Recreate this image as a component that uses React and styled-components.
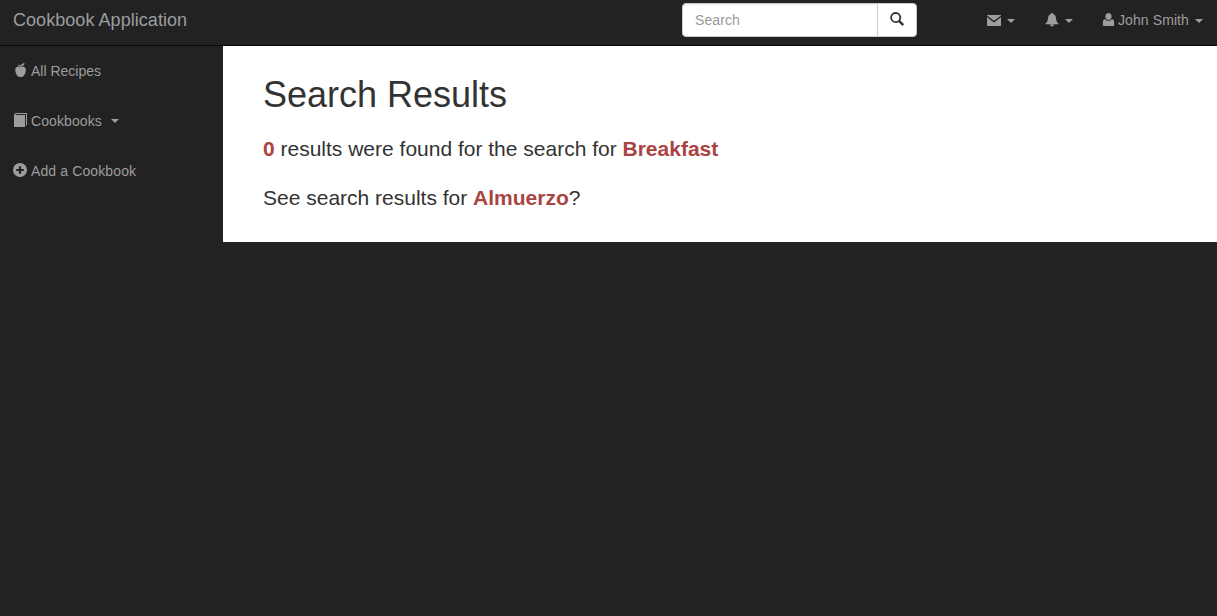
import React from "react";
import styled, { createGlobalStyle } from "styled-components";

const GlobalStyle = createGlobalStyle`
  *, *::before, *::after { box-sizing: border-box; }
  html, body { margin: 0; background: #222; }
  body {
    font-family: "Liberation Sans", Arial, sans-serif;
    font-size: 14px;
    line-height: 20px;
    color: #333;
  }
`;

const Header = styled.header`
  display: flex;
  align-items: flex-start;
  height: 46px;
  border-bottom: 1px solid #080808;
  background: #222;
`;

const Brand = styled.a`
  width: 682px;
  padding: 10px 13px;
  font-size: 18px;
  letter-spacing: 0.05px;
  color: #9d9d9d;
`;

const SearchForm = styled.form`
  display: flex;
  margin: 3px 0 0;
`;

const SearchInput = styled.input`
  width: 196px;
  height: 34px;
  padding: 6px 12px;
  border: 1px solid #ccc;
  border-radius: 4px 0 0 4px;
  background: #fff;
  font: inherit;
  letter-spacing: 0.1px;
  box-shadow: inset 0 1px 1px rgba(0, 0, 0, 0.075);
  outline: none;
  &::placeholder { color: #999; opacity: 1; }
`;

const SearchButton = styled.button`
  display: flex;
  align-items: center;
  justify-content: center;
  width: 40px;
  height: 34px;
  margin-left: -1px;
  padding: 0 0 2px;
  border: 1px solid #ccc;
  border-radius: 0 4px 4px 0;
  background: #fff;
  color: #333;
`;

const NavLink = styled.a`
  display: flex;
  align-items: center;
  height: 20px;
  color: #9d9d9d;
  white-space: nowrap;
`;

const UserNav = styled.nav`
  display: flex;
  flex: 1;
  justify-content: flex-end;
  gap: 30px;
  padding: 10px 14px 0 0;

  ${NavLink}:last-child {
    margin-left: -1px;
    letter-spacing: 0.1px;
  }
`;

const Label = styled.span`
  margin-left: ${(p) => p.$gap || 4}px;
`;

const Caret = styled.span`
  width: 8px;
  height: 4px;
  margin-left: ${(p) => p.$gap || 6}px;
  margin-top: 1px;
  border-top: 4px solid #9d9d9d;
  border-left: 4px solid transparent;
  border-right: 4px solid transparent;
`;

const Glyph = styled.svg`
  display: block;
  flex: none;
  width: 14px;
  height: 14px;
  fill: currentColor;
`;

const Body = styled.div`
  display: flex;
  align-items: flex-start;
`;

const Sidebar = styled.nav`
  flex: none;
  width: 223px;
`;

const SideItem = styled(NavLink)`
  height: 50px;
  padding: 0 13px;
  letter-spacing: ${(p) => p.$tracking || 0}px;

  ${Glyph} {
    margin-bottom: 2px;
  }

  ${Caret} {
    margin-top: 0;
  }
`;

const Content = styled.main`
  flex: 1;
  height: 196px;
  padding: 29px 40px 0;
  background: #fff;
`;

const Title = styled.h1`
  margin: 0 0 19px;
  font-size: 36px;
  font-weight: 400;
  line-height: 1.1;
`;

const Lead = styled.p`
  margin: 0 0 20px;
  font-size: 21px;
  line-height: 1.4;
`;

const Term = styled.strong`
  color: #a94442;
`;

const Apple = () => (
  <Glyph viewBox="0 0 14 14">
    <path d="M7.500 4.300C8.500 3.500 10 3.200 11.300 4c1.400.9 1.800 2.700 1.400 4.600-.4 2.100-1.400 4.200-2.800 5-.7.400-1.300.3-2.300.3s-1.600.1-2.300-.3c-1.500-.8-2.500-2.900-2.900-5C2 6.700 2.400 4.900 3.800 4c1.300-.8 2.700-.5 3.700.3Z" />
    <path d="M7.300 4.600C7.100 3.400 6.400 2.800 5.200 2.500l.5-.9c.9.200 1.500.6 1.900 1.200C8.200 1.200 9.500.3 11.500 0c0 1.900-1.200 2.900-3.400 3l.2 1.600Z" />
  </Glyph>
);

const Book = () => (
  <Glyph viewBox="0 0 14 14">
    <path d="M2.500 0H14v12l-1 1V1H3L2 2h10v12H1V1.500Z" />
  </Glyph>
);

const PlusSign = () => (
  <Glyph viewBox="0 0 14 14">
    <path fillRule="evenodd" d="M7 0a7 7 0 1 1 0 14A7 7 0 0 1 7 0ZM5.900 3.200v2.700H3.200v2.200h2.700v2.700h2.200V8.100h2.700V5.900H8.100V3.200Z" />
  </Glyph>
);

const Envelope = () => (
  <Glyph viewBox="0 0 14 14">
    <path d="M0 2h14v.6L7 7.800 0 2.600Z" />
    <path d="M0 4.100 4.600 7.700 7 9.400l2.400-1.700L14 4.100V13H0Z" />
  </Glyph>
);

const Bell = () => (
  <Glyph viewBox="0 0 14 14">
    <path d="M7 0c.8 0 1.300.5 1.300 1.200 1.700.5 2.600 1.900 2.700 3.700.2 2.700.8 4.300 2.200 5.300.4.300.5.500.5 1H.3c0-.5.1-.7.5-1 1.400-1 2-2.600 2.200-5.300.1-1.800 1-3.200 2.700-3.700C5.700.5 6.200 0 7 0ZM5 11.600h4c-.1 1.300-.8 2-2 2s-1.900-.7-2-2Z" />
  </Glyph>
);

const User = () => (
  <Glyph viewBox="0 0 14 14">
    <path d="M6.500 0c1.900 0 3.100 1.300 3.100 3.200S8.400 7 6.500 7 3.400 5.100 3.400 3.200 4.600 0 6.500 0Z" />
    <path d="M3.200 5.900c.8 1.300 1.900 1.900 3.300 1.900s2.500-.6 3.300-1.900c1.500.5 2.300 1.400 2.300 3v3.400c0 .5-.3.700-.8.700H1.700c-.5 0-.8-.2-.8-.7V8.900c0-1.600.8-2.500 2.300-3Z" />
  </Glyph>
);

const Magnifier = () => (
  <Glyph viewBox="0 0 14 14">
    <path fillRule="evenodd" d="M5.700 0a5.500 5.500 0 0 1 4.600 8.500l3.400 3.300c.3.300.3.600 0 .9l-.9.900c-.3.300-.6.300-.9 0l-3.300-3.400A5.500 5.500 0 1 1 5.700 0Zm0 1.900a3.700 3.700 0 1 0 0 7.400 3.700 3.700 0 0 0 0-7.400Z" />
  </Glyph>
);

export default function App() {
  return (
    <>
      <GlobalStyle />
      <Header>
        <Brand>Cookbook Application</Brand>
        <SearchForm>
          <SearchInput placeholder="Search" />
          <SearchButton type="button" aria-label="Search">
            <Magnifier />
          </SearchButton>
        </SearchForm>
        <UserNav>
          <NavLink><Envelope /><Caret /></NavLink>
          <NavLink><Bell /><Caret /></NavLink>
          <NavLink><User /><Label $gap={2}>John Smith</Label><Caret /></NavLink>
        </UserNav>
      </Header>
      <Body>
        <Sidebar>
          <SideItem><Apple /><Label>All Recipes</Label></SideItem>
          <SideItem $tracking={0.1}><Book /><Label>Cookbooks</Label><Caret $gap={9} /></SideItem>
          <SideItem $tracking={0.12}><PlusSign /><Label>Add a Cookbook</Label></SideItem>
        </Sidebar>
        <Content>
          <Title>Search Results</Title>
          <Lead><Term>0</Term> results were found for the search for <Term>Breakfast</Term></Lead>
          <Lead>See search results for <Term>Almuerzo</Term>?</Lead>
        </Content>
      </Body>
    </>
  );
}
